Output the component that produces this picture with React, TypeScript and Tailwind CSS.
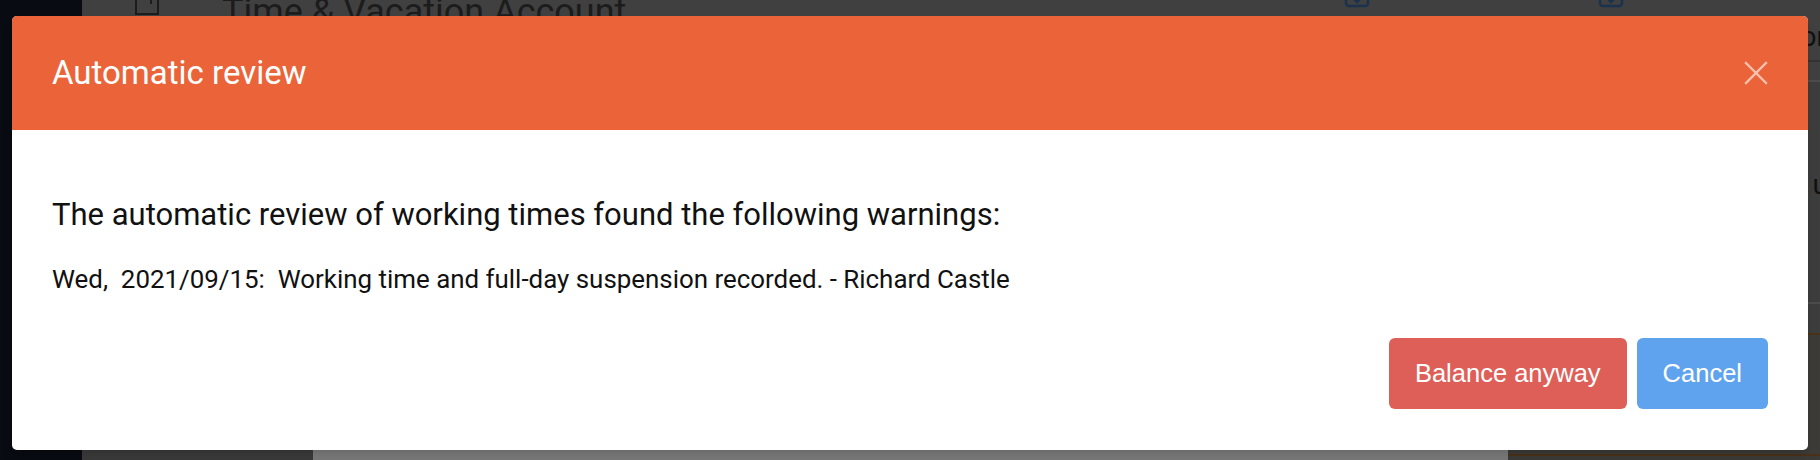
import React from 'react';

function DocIcon() {
  return (
    <svg width="28" height="34" viewBox="0 0 28 34" fill="none" stroke="#1c1c1c" strokeWidth="2">
      <path d="M3 2h15l7 7v23H3z" />
      <path d="M18 2v7h7" />
      <path d="M10 14a4 4 0 0 1 8 0v8" />
    </svg>
  );
}

function SquareIcon() {
  return (
    <svg width="26" height="26" viewBox="0 0 26 26" fill="none" stroke="#1b324d" strokeWidth="2.5">
      <rect x="2" y="2" width="22" height="22" rx="3" />
      <path d="M9 16l4 4 4-4" />
    </svg>
  );
}

function Backdrop() {
  return (
    <div className="flex h-full w-full">
      <div className="w-[82px] h-full bg-[#080c12]" />
      <div className="flex-1 flex flex-col bg-[#404040]">
        {/* page header, mostly covered */}
        <div className="flex items-start h-[30px] -mt-[6px]">
          <div className="ml-[51px] w-[28px] -mt-[12px]">
            <DocIcon />
          </div>
          <div
            className="ml-[61px] text-[36px] leading-[36px] text-[#1c1c1c]"
            style={{ fontFamily: 'Roboto, "Noto Sans", sans-serif' }}
          >
            Time &amp; Vacation Account
          </div>
          <div className="ml-auto mr-[196px] flex gap-[228px] -mt-[12px]">
            <SquareIcon />
            <SquareIcon />
          </div>
        </div>
        <div className="flex justify-end h-[38px] border-b-2 border-[#333]">
          <span
            className="text-[28px] leading-[30px] text-[#111] -mr-[6px] mt-[-2px]"
            style={{ fontFamily: 'Roboto, sans-serif' }}
          >
            or
          </span>
        </div>
        <div className="h-[20px] border-b-2 border-[#4c4c4c]" />
        <div className="flex justify-end h-[222px] border-b-2 border-[#4c4c4c] bg-[#3d3d3d]">
          <span
            className="text-[28px] leading-[30px] text-[#111] mt-[88px] -mr-[8px]"
            style={{ fontFamily: 'Roboto, sans-serif' }}
          >
            u
          </span>
        </div>
        <div className="h-[31px] border-b-2 border-[#4a3219] bg-[#3d3d3d]" />
        <div className="flex-1 flex bg-[#3d3b38]">
          <div className="w-[231px] flex flex-col bg-[#3b3b3b]">
            <div className="ml-[40px] w-[87px] h-[7px] mt-[103px] bg-[#4b2f10]" />
          </div>
          <div className="w-[1195px] bg-[#7b7b7b]" />
          <div className="flex-1 flex flex-col justify-end">
            <div className="h-[2px] mb-[4px] bg-[#4a3219]" />
          </div>
        </div>
      </div>
    </div>
  );
}

export default function App() {
  return (
    <div className="relative w-[1820px] h-[460px] overflow-hidden bg-[#080c12]">
      <Backdrop />

      {/* modal */}
      <div
        className="absolute left-[12px] top-[16px] w-[1796px] h-[434px] flex flex-col rounded-[5px] bg-white overflow-hidden shadow-lg"
        style={{ fontFamily: 'Roboto, "Noto Sans", sans-serif' }}
      >
        <div className="h-[114px] flex items-center justify-between px-[40px] bg-[#eb6338]">
          <h2 className="text-[33px] text-white font-normal">Automatic review</h2>
          <button className="w-[24px] h-[24px] flex items-center justify-center">
            <svg width="24" height="24" viewBox="0 0 24 24" stroke="#f7c1ae" strokeWidth="2.4" strokeLinecap="square">
              <path d="M2 2l20 20M22 2L2 22" />
            </svg>
          </button>
        </div>

        <div className="flex-1 flex flex-col px-[40px] pt-[67px] pb-[41px]">
          <p className="text-[31px] leading-[36px] text-[#111]">
            The automatic review of working times found the following warnings:
          </p>
          <p className="mt-[30px] text-[25.9px] leading-[32px] text-[#111] whitespace-pre">
            {'Wed,  2021/09/15:  Working time and full-day suspension recorded. - Richard Castle'}
          </p>

          <div
            className="mt-auto flex justify-end gap-[10px]"
            style={{ fontFamily: '"Liberation Sans", Arial, sans-serif' }}
          >
            <button className="h-[71px] px-[26px] rounded-[6px] bg-[#de5f58] text-white text-[25.5px]">
              Balance anyway
            </button>
            <button className="h-[71px] px-[26px] rounded-[6px] bg-[#5fa3ef] text-white text-[25.5px]">
              Cancel
            </button>
          </div>
        </div>
      </div>
    </div>
  );
}
